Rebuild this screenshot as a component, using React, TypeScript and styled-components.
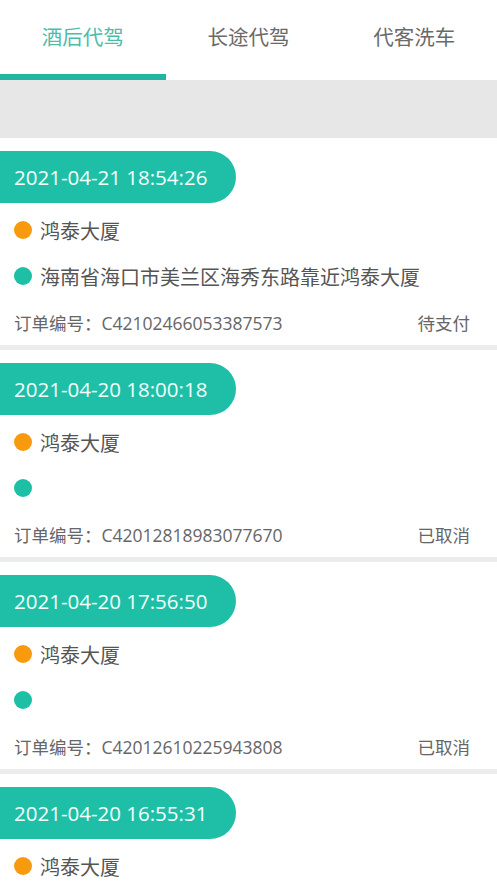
import React from "react";
import styled, { createGlobalStyle } from "styled-components";

type Order = {
  time: string;
  from: string;
  to: string;
  no: string;
  status: string;
};

const orders: Order[] = [
  {
    time: "2021-04-21 18:54:26",
    from: "鸿泰大厦",
    to: "海南省海口市美兰区海秀东路靠近鸿泰大厦",
    no: "C42102466053387573",
    status: "待支付",
  },
  {
    time: "2021-04-20 18:00:18",
    from: "鸿泰大厦",
    to: "",
    no: "C42012818983077670",
    status: "已取消",
  },
  {
    time: "2021-04-20 17:56:50",
    from: "鸿泰大厦",
    to: "",
    no: "C42012610225943808",
    status: "已取消",
  },
  {
    time: "2021-04-20 16:55:31",
    from: "鸿泰大厦",
    to: "",
    no: "",
    status: "",
  },
];

const tabs = ["酒后代驾", "长途代驾", "代客洗车"];

const App = () => {
  return (
    <Page>
      <GlobalStyle />
      <TabBar>
        {tabs.map((t, i) => (
          <Tab key={t} $active={i === 0}>
            {t}
          </Tab>
        ))}
      </TabBar>
      <Band />
      <List>
        {orders.map((o) => (
          <Card key={o.time}>
            <TimePill>{o.time}</TimePill>
            <PlaceRow>
              <Dot $color="#f89a0e" />
              <PlaceText>{o.from}</PlaceText>
            </PlaceRow>
            <PlaceRow>
              <Dot $color="#1dbfa5" />
              <PlaceText>{o.to}</PlaceText>
            </PlaceRow>
            <OrderRow>
              <span>订单编号：{o.no}</span>
              <span>{o.status}</span>
            </OrderRow>
          </Card>
        ))}
      </List>
    </Page>
  );
};

export default App;

const GlobalStyle = createGlobalStyle`
  html, body {
    margin: 0;
    padding: 0;
    background: #ffffff;
  }
  body {
    font-family: "Open Sans", "Noto Sans CJK SC", sans-serif;
    overflow: hidden;
  }
`;

const Page = styled.div`
  width: 497px;
  height: 883px;
  overflow: hidden;
  background: #ffffff;
`;

const TabBar = styled.div`
  display: grid;
  grid-template-columns: repeat(3, 1fr);
  height: 80px;
  background: #ffffff;
`;

const Tab = styled.div<{ $active?: boolean }>`
  display: flex;
  align-items: center;
  justify-content: center;
  padding-bottom: 2px;
  box-sizing: border-box;
  font-size: 20.5px;
  color: ${(p) => (p.$active ? "#4dbcaa" : "#6a6a6a")};
  border-bottom: 6px solid ${(p) => (p.$active ? "#22b6a1" : "transparent")};
`;

const Band = styled.div`
  height: 58px;
  background: #e7e7e7;
`;

const List = styled.div`
  display: flex;
  flex-direction: column;
`;

const Card = styled.div`
  display: flex;
  flex-direction: column;
  padding-top: 13px;
  border-bottom: 5px solid #ececec;
`;

const TimePill = styled.div`
  align-self: flex-start;
  display: flex;
  align-items: center;
  height: 52px;
  width: 236px;
  box-sizing: border-box;
  padding-left: 14px;
  border-radius: 0 26px 26px 0;
  background: #1fbfa7;
  color: #f4fffc;
  font-size: 20.5px;
  margin-bottom: 4px;
`;

const PlaceRow = styled.div`
  display: flex;
  align-items: center;
  height: 46px;
  padding-left: 14px;
  gap: 8px;
`;

const Dot = styled.span<{ $color: string }>`
  width: 18px;
  height: 18px;
  border-radius: 50%;
  flex-shrink: 0;
  background: ${(p) => p.$color};
`;

const PlaceText = styled.span`
  font-size: 20px;
  color: #555555;
`;

const OrderRow = styled.div`
  display: flex;
  align-items: center;
  justify-content: space-between;
  height: 46px;
  padding: 0 27px 0 14px;
  font-size: 17.5px;
  color: #666666;
`;
